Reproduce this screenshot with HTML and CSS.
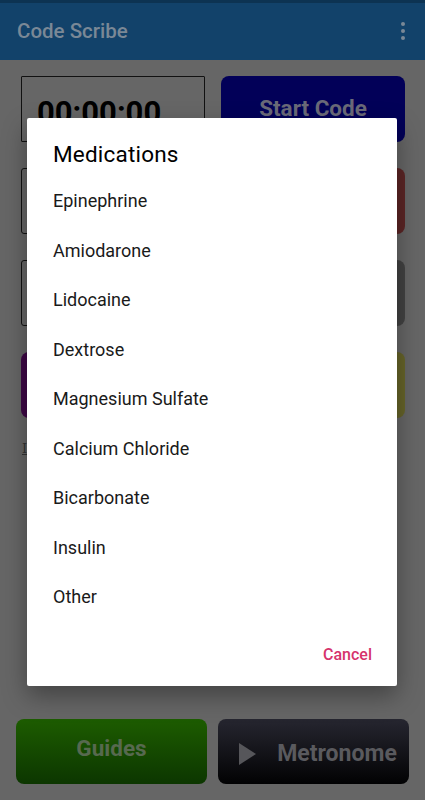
FILE: index.html
```html
<!DOCTYPE html>
<html lang="en">
<head>
    <meta charset="UTF-8">
    <meta name="viewport" content="width=device-width, initial-scale=1.0">
    <title>Code Scribe</title>
    <link rel="stylesheet" href="styles.css">
</head>
<body>
    <div class="status-bar"></div>
    <header class="app-bar">
        <span class="app-title">Code Scribe</span>
        <span class="menu-dots"><i></i><i></i><i></i></span>
    </header>

    <main class="board">
        <div class="row">
            <div class="timer">00:00:00</div>
            <div class="btn btn-start">Start Code</div>
        </div>
        <div class="row">
            <div class="outline-box"></div>
            <div class="btn btn-red"></div>
        </div>
        <div class="row">
            <div class="outline-box"></div>
            <div class="btn btn-grey"></div>
        </div>
        <div class="row">
            <div class="btn btn-purple"></div>
            <div class="btn btn-yellow"></div>
        </div>
        <div class="log-label">I</div>
    </main>

    <footer class="bottom-bar">
        <div class="btn btn-guides">Guides</div>
        <div class="btn btn-metronome">
            <svg class="play-icon" width="17" height="22" viewBox="0 0 17 22"><polygon points="0,0 17,11 0,22" fill="#56565a"/></svg>
            <span>Metronome</span>
        </div>
    </footer>

    <div class="dialog">
        <h2 class="dialog-title">Medications</h2>
        <ul class="med-list">
            <li>Epinephrine</li>
            <li>Amiodarone</li>
            <li>Lidocaine</li>
            <li>Dextrose</li>
            <li>Magnesium Sulfate</li>
            <li>Calcium Chloride</li>
            <li>Bicarbonate</li>
            <li>Insulin</li>
            <li>Other</li>
        </ul>
        <div class="dialog-actions">
            <span class="cancel">Cancel</span>
        </div>
    </div>
</body>
</html>
```

FILE: styles.css
```css
body {
    margin: 0;
    width: 425px;
    height: 800px;
    overflow: hidden;
    background-color: #666666;
    font-family: Roboto, "Noto Sans", sans-serif;
    position: relative;
}
.status-bar {
    height: 3px;
    background-color: #0d3352;
}
.app-bar {
    height: 57px;
    background-color: #12426a;
    display: flex;
    align-items: center;
    justify-content: space-between;
    padding: 0 17px;
}
.app-title {
    color: #7a8896;
    font-size: 20.5px;
    font-weight: 500;
    margin-top: -2px;
}
.menu-dots {
    display: flex;
    flex-direction: column;
    gap: 3px;
    margin-right: 3px;
    margin-top: -2px;
}
.menu-dots i {
    width: 4px;
    height: 4px;
    border-radius: 50%;
    background-color: #7a8896;
}
.board {
    padding: 16px 20px 0 21px;
}
.row {
    display: grid;
    grid-template-columns: 1fr 1fr;
    gap: 16px;
    margin-bottom: 26px;
}
.row > div {
    min-width: 0;
    height: 66px;
    box-sizing: border-box;
}
.timer, .outline-box {
    border: 1px solid #111;
    border-radius: 3px;
}
.timer {
    font-size: 31px;
    font-weight: bold;
    color: #000;
    padding: 17px 0 0 15px;
    overflow: hidden;
    white-space: nowrap;
    border-radius: 1px;
}
.btn {
    border-radius: 8px;
    display: flex;
    align-items: center;
    justify-content: center;
    font-weight: bold;
    color: #6a6a78;
}
.btn-start {
    background-color: #020058;
    font-size: 22.5px;
    padding-bottom: 2px;
}
.btn-red { background-color: #5c2525; }
.btn-grey { background-color: #424242; }
.btn-purple { background-color: #3e0846; }
.btn-yellow { background-color: #666429; }
.log-label {
    font-family: "DejaVu Serif", serif;
    font-size: 13px;
    color: #333;
    text-decoration: underline;
    margin-top: -3px;
    padding-left: 1px;
}
.bottom-bar {
    position: absolute;
    left: 16px;
    right: 16px;
    bottom: 16px;
    display: grid;
    grid-template-columns: 1fr 1fr;
    gap: 11px;
}
.bottom-bar .btn {
    min-width: 0;
    height: 65px;
    box-sizing: border-box;
}
.btn-guides {
    background: linear-gradient(#1d5c00, #0c3600);
    color: #57694f;
    font-size: 22.5px;
    padding-bottom: 7px;
}
.btn-metronome {
    background: linear-gradient(#262630, #020203);
    color: #5a5a5e;
    font-size: 23px;
    gap: 21px;
    padding-top: 4px;
    padding-left: 9px;
}

/* dialog */
.dialog {
    position: absolute;
    left: 27px;
    top: 118px;
    width: 370px;
    height: 568px;
    background-color: #fff;
    border-radius: 2px;
    box-shadow: 0 10px 24px rgba(0, 0, 0, 0.35);
    box-sizing: border-box;
    padding: 23px 0 0 26px;
}
.dialog-title {
    margin: 0;
    font-size: 22.5px;
    font-weight: 400;
    letter-spacing: 0.2px;
    color: #000;
    line-height: 26px;
}
.med-list {
    list-style: none;
    margin: 22px 0 0 0;
    padding: 0;
}
.med-list li {
    font-size: 18px;
    color: #1a1a1a;
    height: 49.5px;
    line-height: 24px;
}
.dialog-actions {
    display: flex;
    justify-content: flex-end;
    padding-right: 25px;
    margin-top: 10px;
}
.cancel {
    color: #d6336c;
    font-size: 16px;
    font-weight: 500;
}
```
